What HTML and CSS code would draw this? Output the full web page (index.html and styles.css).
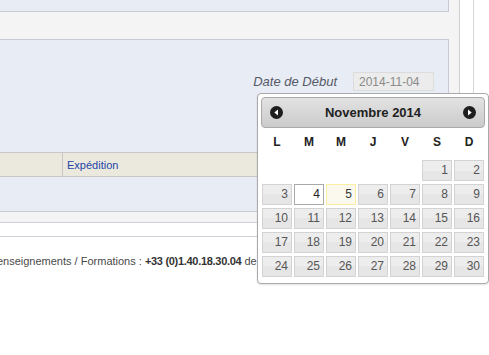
FILE: index.html
```html
<!DOCTYPE html>
<html lang="fr">
<head>
    <meta charset="UTF-8">
    <meta name="viewport" content="width=device-width, initial-scale=1.0">
    <title>Recherche des commandes</title>
    <link rel="stylesheet" href="styles.css">
</head>
<body>
    <div class="layout">
        <div class="main">
            <div class="panel panel-top"></div>
            <div class="panel panel-search">
                <div class="field-row">
                    <label for="dateDebut">Date de Début</label>
                    <input type="text" id="dateDebut" name="dateDebut" value="2014-11-04" readonly>
                </div>
                <table class="list">
                    <thead>
                        <tr>
                            <th class="col-check"></th>
                            <th><a href="#">Expédition</a></th>
                        </tr>
                    </thead>
                </table>
            </div>
        </div>
        <div class="side"></div>
    </div>

    <footer>
        <p>Renseignements / Formations : <b>+33 (0)1.40.18.30.04</b> de 9h à 18h</p>
    </footer>

    <div class="datepicker">
        <div class="dp-header">
            <a class="dp-nav" href="#" title="Précédent">
                <svg width="13" height="13" viewBox="0 0 13 13"><circle cx="6.5" cy="6.5" r="6.5" fill="#1e1e1e"/><polygon points="8,3.5 4.3,6.5 8,9.5" fill="#fff"/></svg>
            </a>
            <span class="dp-title">Novembre 2014</span>
            <a class="dp-nav" href="#" title="Suivant">
                <svg width="13" height="13" viewBox="0 0 13 13"><circle cx="6.5" cy="6.5" r="6.5" fill="#1e1e1e"/><polygon points="5,3.5 8.7,6.5 5,9.5" fill="#fff"/></svg>
            </a>
        </div>
        <div class="dp-days">
            <span>L</span><span>M</span><span>M</span><span>J</span><span>V</span><span>S</span><span>D</span>
        </div>
        <div class="dp-grid">
            <a class="dp-cell first" href="#">1</a>
            <a class="dp-cell" href="#">2</a>
            <a class="dp-cell" href="#">3</a>
            <a class="dp-cell active" href="#">4</a>
            <a class="dp-cell today" href="#">5</a>
            <a class="dp-cell" href="#">6</a>
            <a class="dp-cell" href="#">7</a>
            <a class="dp-cell" href="#">8</a>
            <a class="dp-cell" href="#">9</a>
            <a class="dp-cell" href="#">10</a>
            <a class="dp-cell" href="#">11</a>
            <a class="dp-cell" href="#">12</a>
            <a class="dp-cell" href="#">13</a>
            <a class="dp-cell" href="#">14</a>
            <a class="dp-cell" href="#">15</a>
            <a class="dp-cell" href="#">16</a>
            <a class="dp-cell" href="#">17</a>
            <a class="dp-cell" href="#">18</a>
            <a class="dp-cell" href="#">19</a>
            <a class="dp-cell" href="#">20</a>
            <a class="dp-cell" href="#">21</a>
            <a class="dp-cell" href="#">22</a>
            <a class="dp-cell" href="#">23</a>
            <a class="dp-cell" href="#">24</a>
            <a class="dp-cell" href="#">25</a>
            <a class="dp-cell" href="#">26</a>
            <a class="dp-cell" href="#">27</a>
            <a class="dp-cell" href="#">28</a>
            <a class="dp-cell" href="#">29</a>
            <a class="dp-cell" href="#">30</a>
        </div>
    </div>
</body>
</html>
```

FILE: styles.css
```css
body {
    margin: 0;
    padding: 0;
    background: #fff;
    font-family: "Liberation Sans", Arial, sans-serif;
    color: #444;
}

.layout {
    display: flex;
}

.main {
    width: 459px;
    background: #f4f4f4;
    border-right: 1px solid #cdcdd4;
    border-bottom: 1px solid #cfd0d8;
    padding-bottom: 10px;
}

.side {
    width: 13px;
    border-right: 1px solid #d6d6dc;
}

.panel {
    width: 448px;
    background: #e8ecf5;
    border: 1px solid #c6c9d8;
    border-left: 0;
}

.panel-top {
    height: 11px;
    border-top: 0;
}

.panel-search {
    margin-top: 27px;
    height: 171px;
}

.field-row {
    display: flex;
    justify-content: flex-end;
    align-items: center;
    gap: 16px;
    padding: 32px 14px 0 0;
}

.field-row label {
    font-size: 13px;
    font-style: italic;
    color: #555a66;
}

.field-row input {
    box-sizing: border-box;
    width: 81px;
    height: 19px;
    margin: 0;
    padding: 0 5px;
    font-family: "Liberation Sans", Arial, sans-serif;
    font-size: 12px;
    color: #8a8a8a;
    background: #ececec;
    border: 1px solid #dcdcdc;
}

.list {
    width: 100%;
    margin-top: 61px;
    border-collapse: collapse;
}

.list th {
    height: 23px;
    padding: 0 4px;
    text-align: left;
    font-size: 11px;
    font-weight: normal;
    background: #ebe8de;
    border-top: 1px solid #c8c8c8;
    border-bottom: 1px solid #c8c8c8;
    border-left: 1px solid #c8c8c8;
}

.list th.col-check {
    width: 54px;
    border-left: 0;
}

.list th a {
    color: #1d45a8;
    text-decoration: none;
}

footer {
    margin-top: 13px;
    border-top: 1px solid #cfd0d8;
    padding-top: 17px;
}

footer p {
    margin: 0;
    font-size: 11px;
    line-height: 14px;
    color: #4a4a4a;
    white-space: nowrap;
    text-indent: -11px;
}

footer b {
    color: #333;
    letter-spacing: -0.3px;
}

/* calendrier */
.datepicker {
    position: absolute;
    left: 257px;
    top: 93px;
    width: 224px;
    padding: 3px 3px 6px 3px;
    background: #fff;
    border: 1px solid #aaa;
    border-radius: 4px;
    box-shadow: 0 1px 2px rgba(0, 0, 0, 0.12);
}

.dp-header {
    display: flex;
    align-items: center;
    justify-content: space-between;
    box-sizing: border-box;
    height: 31px;
    padding: 0 8px;
    background: linear-gradient(#e2e2e2, #cbcbcb);
    border: 1px solid #aaa;
    border-radius: 4px;
}

.dp-nav {
    display: flex;
}

.dp-title {
    font-size: 13px;
    font-weight: bold;
    color: #222;
}

.dp-days {
    display: grid;
    grid-template-columns: repeat(7, 30px);
    column-gap: 2px;
    padding: 0 1px;
    margin: 4px 0 8px;
    height: 20px;
    line-height: 20px;
    text-align: center;
    font-size: 12px;
    font-weight: bold;
    color: #222;
}

.dp-grid {
    display: grid;
    grid-template-columns: repeat(7, 30px);
    grid-auto-rows: 21px;
    gap: 3px 2px;
    padding: 0 1px;
}

.dp-cell {
    box-sizing: border-box;
    padding-right: 3px;
    text-align: right;
    font-size: 12px;
    line-height: 19px;
    color: #555;
    text-decoration: none;
    background: linear-gradient(#ededed 50%, #e6e6e6 50%);
    border: 1px solid #d3d3d3;
}

.dp-cell.first {
    grid-column-start: 6;
}

.dp-cell.active {
    background: #fff;
    border-color: #aaa;
    color: #212121;
}

.dp-cell.today {
    background: #fbf9ee;
    border-color: #fcefa1;
    color: #363636;
}
```
